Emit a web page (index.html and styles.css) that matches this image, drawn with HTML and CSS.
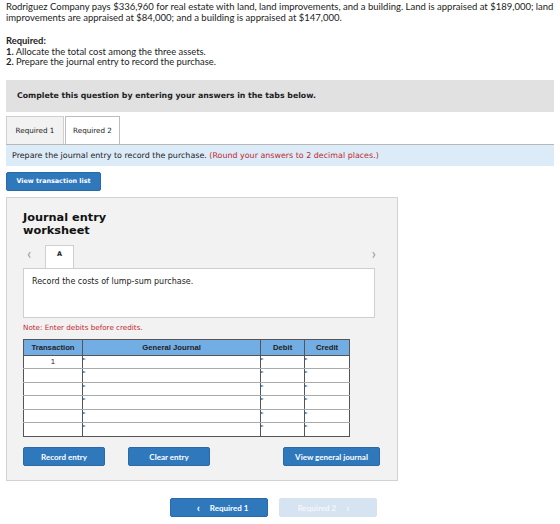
FILE: index.html
```html
<!DOCTYPE html>
<html lang="en">
<head>
    <meta charset="UTF-8">
    <title>Journal Entry</title>
    <link rel="stylesheet" href="styles.css">
</head>
<body>
    <div class="question">
        <p class="prompt">Rodriguez Company pays $336,960 for real estate with land, land improvements, and a building. Land is appraised at $189,000; land improvements are appraised at $84,000; and a building is appraised at $147,000.</p>

        <div class="required">
            <strong>Required:</strong>
            <div><strong>1.</strong> Allocate the total cost among the three assets.</div>
            <div><strong>2.</strong> Prepare the journal entry to record the purchase.</div>
        </div>

        <div class="instructions">Complete this question by entering your answers in the tabs below.</div>

        <div class="tabs">
            <div class="tab">Required 1</div>
            <div class="tab active">Required 2</div>
        </div>

        <div class="task-bar">
            Prepare the journal entry to record the purchase. <span class="red">(Round your answers to 2 decimal places.)</span>
        </div>

        <button class="btn btn-list">View transaction list</button>

        <div class="worksheet">
            <h3>Journal entry<br>worksheet</h3>

            <div class="entry-nav">
                <span class="arrow">&lsaquo;</span>
                <div class="entry-tab">A</div>
                <span class="arrow right">&rsaquo;</span>
            </div>

            <div class="entry-desc">Record the costs of lump-sum purchase.</div>

            <p class="note">Note: Enter debits before credits.</p>

            <table class="journal">
                <thead>
                    <tr>
                        <th class="col-tr">Transaction</th>
                        <th class="col-gj">General Journal</th>
                        <th class="col-dr">Debit</th>
                        <th class="col-cr">Credit</th>
                    </tr>
                </thead>
                <tbody id="rows"></tbody>
            </table>

            <div class="actions">
                <button class="btn">Record entry</button>
                <button class="btn btn-clear">Clear entry</button>
                <button class="btn btn-gj">View general journal</button>
            </div>
        </div>

        <div class="pager">
            <button class="btn btn-prev"><span class="chev">&lsaquo;</span> Required 1</button>
            <button class="btn btn-next" disabled>Required 2 <span class="chev">&rsaquo;</span></button>
        </div>
    </div>

    <script>
        // build the 6 empty journal rows
        const rows = document.getElementById("rows");
        for (let i = 0; i < 6; i++) {
            const tr = document.createElement("tr");
            tr.innerHTML = `
                <td class="col-tr">${i === 0 ? "1" : ""}</td>
                <td class="mark"></td>
                <td class="mark"></td>
                <td class="mark"></td>
            `;
            rows.appendChild(tr);
        }
    </script>
</body>
</html>
```

FILE: styles.css
```css
body {
    margin: 0;
    padding: 0 6px;
    background-color: white;
    color: #222;
    font-family: 'Lato', sans-serif;
}

.question {
    width: 548px;
}

.prompt {
    margin: 0;
    padding-top: 1px;
    font-size: 9.5px;
    line-height: 11px;
    width: 554px;
}

.required {
    margin-top: 13px;
    font-size: 9.4px;
    line-height: 10.5px;
}

.instructions {
    margin-top: 12px;
    height: 32px;
    line-height: 32px;
    padding-left: 11px;
    background-color: #e1e1e1;
    font-family: 'DejaVu Sans', sans-serif;
    font-weight: bold;
    font-size: 7.8px;
}

.tabs {
    display: flex;
    margin-top: 4px;
    height: 28px;
}

.tab {
    width: 56px;
    border: 1px solid #cfcfcf;
    border-bottom: none;
    background-color: #f2f2f2;
    font-family: 'DejaVu Sans', sans-serif;
    font-size: 7.2px;
    line-height: 28px;
    text-align: center;
    margin-right: 1px;
}

.tab.active {
    width: 53px;
    background-color: white;
    border-color: #bdbdbd;
}

.task-bar {
    height: 21px;
    line-height: 21px;
    border-top: 1px solid #b8b8b8;
    background-color: #dcebf8;
    padding-left: 6px;
    font-family: 'DejaVu Sans', sans-serif;
    font-size: 7.95px;
}

.red {
    color: #c2272d;
}

.btn {
    border: 1px solid #2a6aa8;
    border-radius: 2px;
    background-color: #2f78bc;
    color: white;
    font-family: 'Lato', sans-serif;
    font-weight: bold;
    font-size: 8px;
    height: 19px;
    padding: 0;
    cursor: pointer;
}

.btn-list {
    display: block;
    margin-top: 6px;
    width: 95px;
    font-family: 'DejaVu Sans', sans-serif;
    font-size: 6.4px;
}

.worksheet {
    margin-top: 6px;
    width: 374px;
    height: 269px;
    border: 1px solid #d2d2d2;
    background-color: #f2f2f2;
    padding: 13px 0 0 16px;
}

.worksheet h3 {
    margin: 0;
    font-family: 'DejaVu Sans', sans-serif;
    font-size: 11.3px;
    line-height: 13px;
    color: #111;
}

.entry-nav {
    display: flex;
    align-items: flex-start;
    margin-top: 8px;
    width: 353px;
    height: 23px;
}

.arrow {
    color: #999;
    font-size: 16px;
    line-height: 16px;
    width: 22px;
    padding-left: 4px;
    box-sizing: border-box;
}

.arrow.right {
    margin-left: auto;
    width: auto;
}

.entry-tab {
    width: 29px;
    height: 23px;
    background-color: white;
    border: 1px solid #cfcfcf;
    border-bottom: none;
    box-sizing: border-box;
    font-family: 'DejaVu Sans', sans-serif;
    font-weight: bold;
    font-size: 6.5px;
    line-height: 16px;
    text-align: center;
}

.entry-desc {
    border: 1px solid #cfcfcf;
    background-color: white;
    padding: 8px 0 0 8px;
    box-sizing: border-box;
    width: 352px;
    height: 50px;
    font-family: 'DejaVu Sans', sans-serif;
    font-size: 8px;
}

.note {
    margin: 5px 0 0;
    font-family: 'DejaVu Sans', sans-serif;
    font-size: 7.2px;
    color: #c2272d;
}

.journal {
    margin-top: 7px;
    border-collapse: collapse;
    width: 327px;
    font-family: 'Liberation Sans', sans-serif;
    font-size: 7.7px;
}

.journal th {
    height: 15px;
    padding: 0;
    background-color: #72ade4;
    border: 1px solid #555;
    color: #222;
}

.journal td {
    height: 12.6px;
    padding: 0;
    background-color: white;
    border-top: 1px solid #aaa;
    border-bottom: 1px solid #aaa;
    border-left: 1px solid #555;
    border-right: 1px solid #555;
    position: relative;
    text-align: center;
    vertical-align: top;
    line-height: 11px;
}

.journal tbody tr:last-child td {
    border-bottom: 1px solid #555;
}

.col-tr { width: 58px; }
.col-gj { width: 178px; }
.col-dr { width: 43px; }
.col-cr { width: 44px; }

/* small blue markers in editable cells */
.journal td.mark::before {
    content: "";
    position: absolute;
    left: 0;
    top: 2px;
    border-left: 3px solid #2f78bc;
    border-top: 1.5px solid transparent;
    border-bottom: 1.5px solid transparent;
}

.actions {
    display: flex;
    margin-top: 10px;
}

.actions .btn {
    width: 82px;
}

.actions .btn-clear {
    margin-left: 23px;
}

.actions .btn-gj {
    width: 97px;
    margin-left: 73px;
}

.pager {
    display: flex;
    justify-content: center;
    gap: 11px;
    margin-top: 17px;
    padding-right: 14px;
}

.pager .btn {
    width: 98px;
    height: 19px;
}

.chev {
    font-size: 11px;
    margin: 0 8px;
    vertical-align: -1px;
}

.btn-next,
.btn-next:disabled {
    background-color: #d6e4f2;
    border-color: #d6e4f2;
    color: #f5f8fb;
    cursor: default;
}
```
